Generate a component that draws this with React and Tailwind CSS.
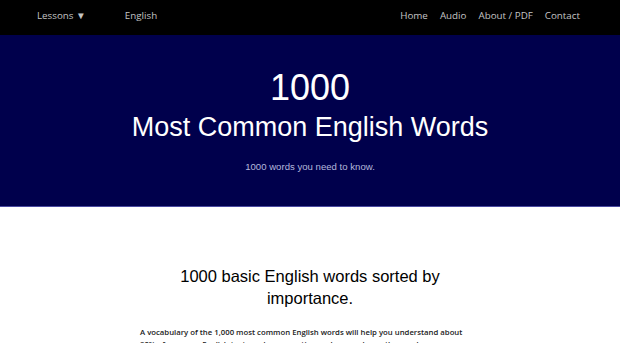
export default function App() {
  return (
    <div className="min-h-[343px] bg-white overflow-hidden">
      {/* Top nav */}
      <nav className="h-[35px] bg-black flex items-center justify-between pl-[37px] pr-[40px] pb-[2px] font-['Open_Sans',sans-serif] text-[9.8px] text-[#c4c4c4]">
        <div className="flex items-center">
          <span>Lessons ▼</span>
          <span className="ml-[39px]">English</span>
        </div>
        <div className="flex items-center gap-[12px]">
          <span>Home</span>
          <span>Audio</span>
          <span>About / PDF</span>
          <span>Contact</span>
        </div>
      </nav>

      {/* Hero */}
      <header className="h-[172px] bg-[#00004c] border-b border-[#4a4aa0] flex flex-col items-center font-['Liberation_Sans',Arial,sans-serif] text-white">
        <h1 className="mt-[33px] text-[36px] leading-[40px] font-light">1000</h1>
        <p className="mt-[2px] text-[27px] leading-[34px] font-light">Most Common English Words</p>
        <p className="mt-[16px] text-[9.6px] text-[#b4b8dc]">1000 words you need to know.</p>
      </header>

      {/* Content */}
      <main className="flex flex-col items-center">
        <h2 className="mt-[58px] w-[280px] text-center font-['Liberation_Sans',Arial,sans-serif] text-[16.5px] leading-[22px] text-black">
          1000 basic English words sorted by importance.
        </h2>
        <p className="mt-[17px] ml-[-2px] w-[338px] font-['Open_Sans',sans-serif] font-semibold text-[7.75px] leading-[12px] text-[#222]">
          A vocabulary of the 1,000 most common English words will help you understand about 80% of common English texts and conversations, when you know the words.
        </p>
      </main>
    </div>
  );
}
